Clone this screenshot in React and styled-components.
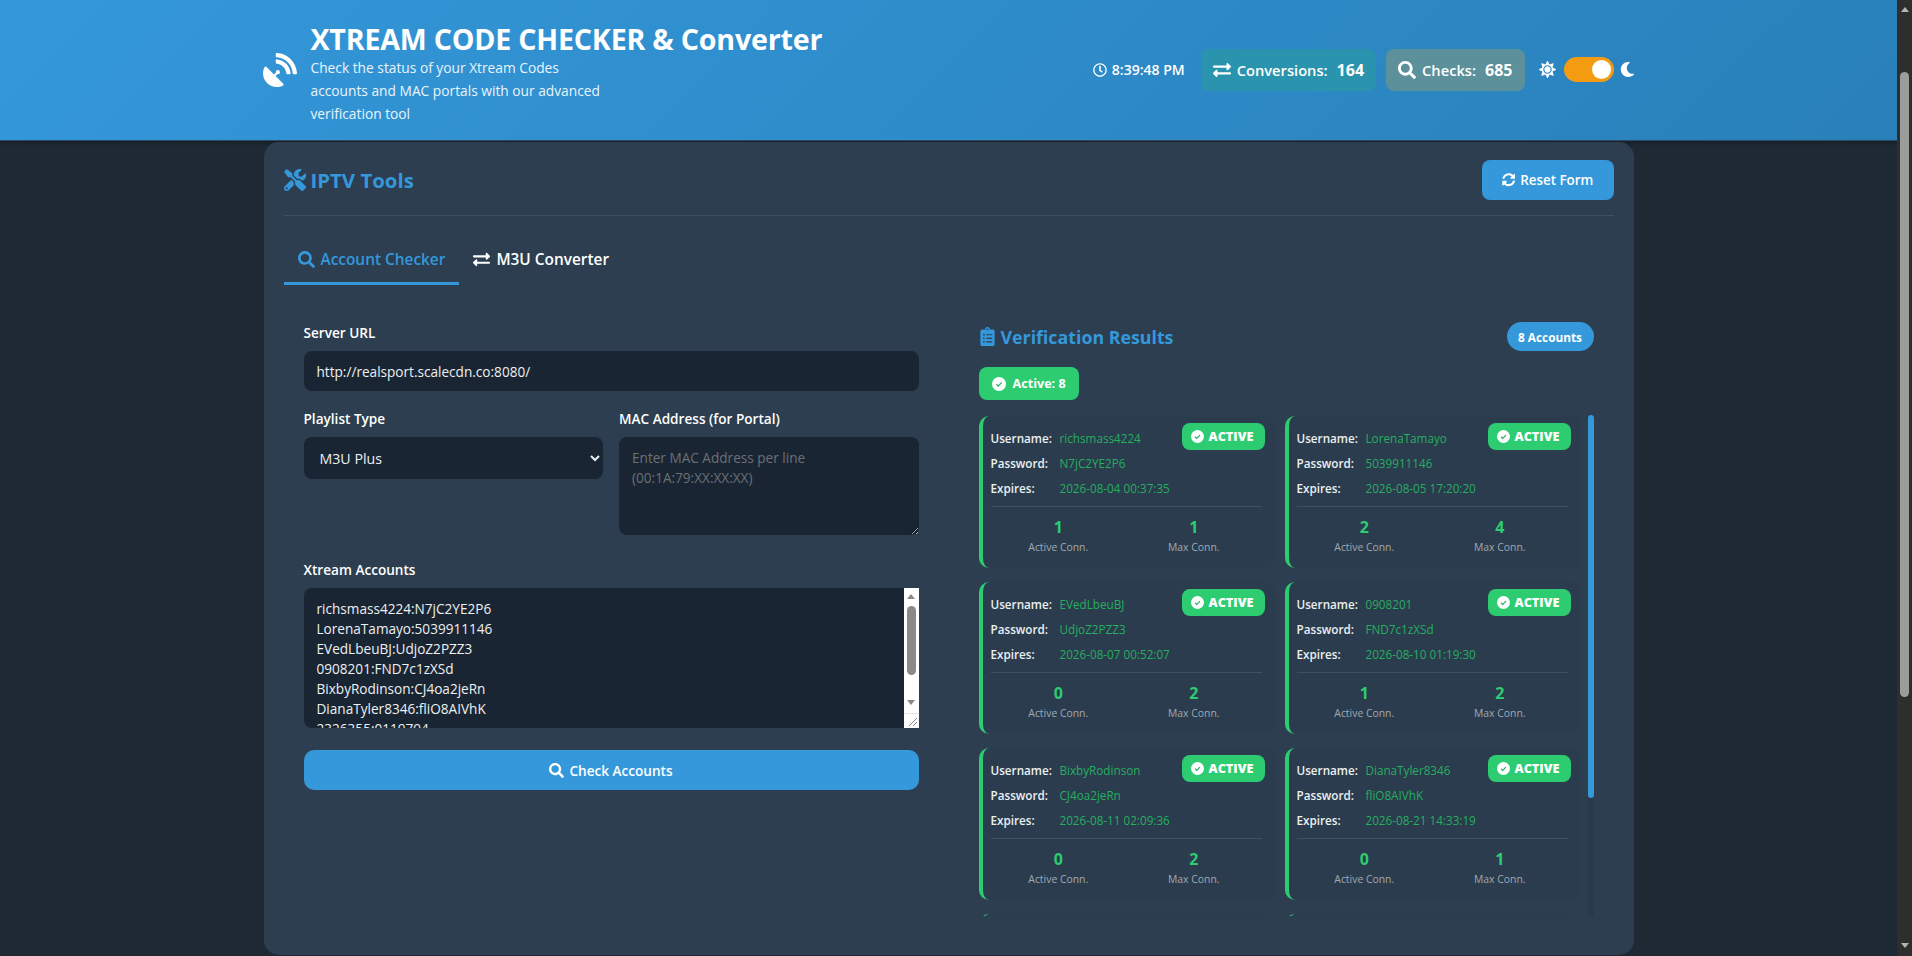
import React from "react";
import styled, { createGlobalStyle } from "styled-components";
import {
  FaSatelliteDish,
  FaTools,
  FaSearch,
  FaExchangeAlt,
  FaRegClock,
  FaSyncAlt,
  FaClipboardList,
  FaSun,
  FaMoon,
} from "react-icons/fa";

const accounts = [
  { user: "richsmass4224", pass: "N7jC2YE2P6", exp: "2026-08-04 00:37:35", active: 1, max: 1 },
  { user: "LorenaTamayo", pass: "5039911146", exp: "2026-08-05 17:20:20", active: 2, max: 4 },
  { user: "EVedLbeuBJ", pass: "UdjoZ2PZZ3", exp: "2026-08-07 00:52:07", active: 0, max: 2 },
  { user: "0908201", pass: "FND7c1zXSd", exp: "2026-08-10 01:19:30", active: 1, max: 2 },
  { user: "BixbyRodinson", pass: "CJ4oa2jeRn", exp: "2026-08-11 02:09:36", active: 0, max: 2 },
  { user: "DianaTyler8346", pass: "fliO8AIVhK", exp: "2026-08-21 14:33:19", active: 0, max: 1 },
  { user: "2326355", pass: "0119794", exp: "2026-08-24 09:12:41", active: 0, max: 1 },
  { user: "MarkusHale77", pass: "Tz81kQe3Lm", exp: "2026-08-29 21:44:02", active: 0, max: 1 },
];

const accountText = accounts.map((a) => a.user + ":" + a.pass).join("\n");

const GlobalStyle = createGlobalStyle`
  html, body {
    margin: 0;
    padding: 0;
    height: 100%;
    overflow: hidden;
    background: #1e2933;
  }
  * {
    box-sizing: border-box;
  }
  body {
    font-family: "Open Sans", "Noto Sans", sans-serif;
    color: #fff;
  }
`;

const Shell = styled.div`
  display: flex;
  height: 100vh;
`;

const Page = styled.div`
  flex: 1;
  min-width: 0;
  overflow: hidden;
  background: #1e2933;
`;

// scrollbars: the photographed browser hides real ones, so they are drawn
const PageRail = styled.div`
  position: relative;
  flex: none;
  width: 15px;
  background: #2e2e2e;
`;

const PageThumb = styled.div`
  position: absolute;
  top: 72px;
  left: 3px;
  width: 9px;
  height: 625px;
  border-radius: 5px;
  background: #9c9c9c;
`;

const Arrow = styled.div`
  position: absolute;
  left: ${(p) => p.$left}px;
  top: ${(p) => p.$top}px;
  width: 0;
  height: 0;
  border-left: 4px solid transparent;
  border-right: 4px solid transparent;
  ${(p) => (p.$down ? "border-top" : "border-bottom")}: 5px solid ${(p) => p.$color};
`;

const Header = styled.header`
  height: 141px;
  padding: 15px 0 16px;
  background: linear-gradient(135deg, #3498db, #2980b9);
  border-bottom: 1px solid #2c4a63;
  box-shadow: 0 2px 4px rgba(0, 0, 0, 0.25);
`;

const HeaderInner = styled.div`
  width: 1370px;
  height: 100%;
  margin: 0 auto;
  display: flex;
  align-items: center;
  justify-content: space-between;
`;

const Brand = styled.div`
  display: flex;
  align-items: center;
  gap: 14px;
  margin-left: -1px;

  & > svg {
    font-size: 34px;
    flex: none;
  }
`;

const BrandText = styled.div`
  padding-top: 7px;
`;

const Title = styled.h1`
  margin: 0 0 -1px;
  font-size: 28.6px;
  line-height: 36px;
  font-weight: 700;
  letter-spacing: -0.2px;
`;

const Subtitle = styled.p`
  margin: 0;
  width: 300px;
  font-size: 13.75px;
  line-height: 23px;
  color: #eaf4fb;
`;

const Stats = styled.div`
  display: flex;
  align-items: center;
`;

const Clock = styled.div`
  display: flex;
  align-items: center;
  gap: 5px;
  margin-right: 16px;
  font-size: 14px;
  font-weight: 600;
`;

const StatPill = styled.div`
  display: flex;
  align-items: center;
  gap: 6px;
  height: 42px;
  padding: 0 12px;
  margin-right: 10px;
  border-radius: 8px;
  font-size: 14.7px;
  font-weight: 600;
  background: ${(p) => p.$bg};

  & svg {
    font-size: 18px;
  }
  & b {
    margin-left: 3px;
    font-size: 16px;
    font-weight: 700;
  }
`;

const ThemeSwitch = styled.div`
  display: flex;
  align-items: center;
  margin-left: 4px;
  margin-right: -1px;
`;

const SunIcon = styled(FaSun)`
  font-size: 17px;
  margin-right: 8px;
`;

const MoonIcon = styled(FaMoon)`
  font-size: 15px;
  margin-left: 6px;
`;

const Toggle = styled.div`
  width: 50px;
  height: 25px;
  border-radius: 13px;
  background: #f39c12;
  display: flex;
  align-items: center;
  justify-content: flex-end;
  padding-right: 3px;

  &::after {
    content: "";
    width: 19px;
    height: 19px;
    border-radius: 50%;
    background: #fff;
  }
`;

const Main = styled.main`
  padding-top: 1px;
`;

const Card = styled.section`
  width: 1370px;
  margin: 0 auto;
  padding: 18px 20px 39px;
  border-radius: 15px;
  background: #2c3e50;
`;

const CardHead = styled.div`
  display: flex;
  align-items: center;
  justify-content: space-between;
  padding-bottom: 15px;
  border-bottom: 1px solid #3e5064;
`;

const CardTitle = styled.h2`
  margin: 0;
  display: flex;
  align-items: center;
  gap: 5px;
  font-size: 20.4px;
  font-weight: 700;
  color: #3498db;

  & svg {
    font-size: 22px;
  }
`;

const ResetButton = styled.button`
  display: flex;
  align-items: center;
  justify-content: center;
  gap: 5px;
  width: 132px;
  height: 40px;
  border: 0;
  border-radius: 8px;
  background: #3498db;
  color: #fff;
  font: 600 13.4px "Open Sans", sans-serif;
`;

const Tabs = styled.nav`
  display: flex;
  margin-top: 17px;
`;

const Tab = styled.div`
  display: flex;
  align-items: center;
  gap: 6px;
  height: 52px;
  padding: 4px 14px 0;
  font-size: 15.4px;
  font-weight: 600;
  color: ${(p) => (p.$active ? "#3498db" : "#fff")};
  border-bottom: 3px solid ${(p) => (p.$active ? "#3498db" : "transparent")};

  & svg {
    font-size: 17px;
  }
`;

const Columns = styled.div`
  display: grid;
  grid-template-columns: 615px 615px;
  column-gap: 60px;
  padding: 37px 20px 0;
`;

const Form = styled.form`
  padding-top: 1px;
`;

const Label = styled.label`
  display: block;
  height: 20px;
  margin-bottom: 8px;
  font-size: 13.6px;
  line-height: 20px;
  font-weight: 600;
`;

const Field = styled.div`
  margin-bottom: ${(p) => p.$gap || 18}px;
`;

const FormRow = styled.div`
  display: grid;
  grid-template-columns: 1fr 1fr;
  column-gap: 16px;
  margin-bottom: 25px;
`;

const controlStyles = `
  display: block;
  width: 100%;
  border: 0;
  outline: 0;
  border-radius: 8px;
  background: #1a2533;
  color: #ecf0f1;
  font-family: "Open Sans", sans-serif;
  font-size: 13.6px;
`;

const TextInput = styled.input`
  ${controlStyles}
  height: 40px;
  padding: 0 13px;
`;

const Select = styled.select`
  ${controlStyles}
  height: 42px;
  padding: 0 12px;
  font-size: 14.2px;
  color-scheme: dark;
`;

const TextArea = styled.textarea`
  ${controlStyles}
  height: ${(p) => p.$height}px;
  padding: 11px 13px;
  line-height: 20px;
  resize: vertical;
  overflow: hidden;

  &::placeholder {
    color: #6a7076;
    opacity: 1;
  }
`;

const TextAreaWrap = styled.div`
  position: relative;
`;

const AreaRail = styled.div`
  position: absolute;
  top: 0;
  right: 0;
  bottom: 0;
  width: 15px;
  background: #fff;
`;

const AreaThumb = styled.div`
  position: absolute;
  top: 18px;
  left: 3px;
  width: 9px;
  height: 69px;
  border-radius: 5px;
  background: #8a8a8a;
`;

const AreaCorner = styled.div`
  position: absolute;
  left: 0;
  right: 0;
  bottom: 0;
  height: 15px;
  border-top: 1px solid #e2e2e2;

  & svg {
    position: absolute;
    right: 1px;
    bottom: 1px;
  }
`;

const CheckButton = styled.button`
  display: flex;
  align-items: center;
  justify-content: center;
  gap: 5px;
  width: 100%;
  height: 40px;
  border: 0;
  border-radius: 10px;
  background: #3498db;
  color: #fff;
  font: 600 13.6px "Open Sans", sans-serif;

  & svg {
    font-size: 15px;
  }
`;

const ResultsHead = styled.div`
  display: flex;
  align-items: center;
  justify-content: space-between;
  height: 29px;
`;

const ResultsTitle = styled.h3`
  margin: 0 0 0 -1px;
  display: flex;
  align-items: center;
  gap: 4px;
  font-size: 17.8px;
  font-weight: 700;
  color: #3498db;

  & svg {
    font-size: 19px;
  }
`;

const CountBadge = styled.span`
  display: flex;
  align-items: center;
  justify-content: center;
  width: 87px;
  height: 29px;
  border-radius: 15px;
  background: #3498db;
  font-size: 11.8px;
  font-weight: 700;
`;

const Summary = styled.div`
  display: inline-flex;
  align-items: center;
  gap: 7px;
  height: 33px;
  margin: 16px 0;
  padding: 0 13px;
  border-radius: 8px;
  background: #2ecc71;
  font-size: 12.6px;
  font-weight: 700;
  vertical-align: top;
`;

const ResultFrame = styled.div`
  position: relative;
`;

const ResultList = styled.div`
  display: grid;
  grid-template-columns: 296px 296px;
  gap: 14px 10px;
  height: 500px;
  overflow: hidden;
  align-content: start;
`;

const ListRail = styled.div`
  position: absolute;
  top: 0;
  right: 0;
  bottom: 0;
  width: 6px;
  background: rgba(0, 0, 0, 0.05);
`;

const ListThumb = styled.div`
  position: absolute;
  top: -1px;
  left: 0;
  width: 6px;
  height: 383px;
  border-radius: 3px;
  background: #3498db;
`;

const ResultCard = styled.article`
  position: relative;
  height: 152px;
  padding: 9px 13px 10px 8px;
  border-left: 4px solid #2ecc71;
  border-radius: 10px;
  background: rgba(0, 0, 0, 0.03);
`;

const StatusBadge = styled.span`
  position: absolute;
  top: 7px;
  right: 10px;
  display: flex;
  align-items: center;
  gap: 5px;
  width: 83px;
  height: 27px;
  padding-left: 9px;
  border-radius: 8px;
  background: #2ecc71;
  font-size: 12.6px;
  font-weight: 800;
`;

const InfoRow = styled.div`
  display: grid;
  grid-template-columns: 69px 1fr;
  align-items: center;
  height: 25px;
  font-size: 11.7px;

  & strong {
    font-weight: 600;
    color: #ecf0f1;
  }
  & span {
    color: #27ae60;
  }
`;

const ConnGrid = styled.div`
  display: grid;
  grid-template-columns: 1fr 1fr;
  margin-top: 6px;
  padding-top: 10px;
  border-top: 1px solid #3e5064;
  text-align: center;
`;

const ConnValue = styled.div`
  font-size: 16px;
  line-height: 20px;
  font-weight: 700;
  color: #2ecc71;
`;

const ConnLabel = styled.div`
  font-size: 10.4px;
  line-height: 21px;
  color: #a0a9b3;
`;

function CheckBadge({ size }) {
  return (
    <svg width={size} height={size} viewBox="0 0 16 16" aria-hidden="true">
      <circle cx="8" cy="8" r="8" fill="#fff" />
      <path d="M5 8.3l2.1 2.1L11 6.2" fill="none" stroke="#27ae60" strokeWidth="1.4" />
    </svg>
  );
}

function AccountCard({ account }) {
  return (
    <ResultCard>
      <StatusBadge>
        <CheckBadge size={13} />
        ACTIVE
      </StatusBadge>
      <InfoRow>
        <strong>Username:</strong>
        <span>{account.user}</span>
      </InfoRow>
      <InfoRow>
        <strong>Password:</strong>
        <span>{account.pass}</span>
      </InfoRow>
      <InfoRow>
        <strong>Expires:</strong>
        <span>{account.exp}</span>
      </InfoRow>
      <ConnGrid>
        <div>
          <ConnValue>{account.active}</ConnValue>
          <ConnLabel>Active Conn.</ConnLabel>
        </div>
        <div>
          <ConnValue>{account.max}</ConnValue>
          <ConnLabel>Max Conn.</ConnLabel>
        </div>
      </ConnGrid>
    </ResultCard>
  );
}

export default function App() {
  return (
    <Shell>
      <GlobalStyle />
      <Page>
        <Header>
          <HeaderInner>
            <Brand>
              <FaSatelliteDish />
              <BrandText>
                <Title>XTREAM CODE CHECKER &amp; Converter</Title>
                <Subtitle>
                  Check the status of your Xtream Codes accounts and MAC portals with our advanced verification tool
                </Subtitle>
              </BrandText>
            </Brand>
            <Stats>
              <Clock>
                <FaRegClock />
                8:39:48 PM
              </Clock>
              <StatPill $bg="#2a94ae">
                <FaExchangeAlt />
                Conversions: <b>164</b>
              </StatPill>
              <StatPill $bg="#5c919c">
                <FaSearch />
                Checks: <b>685</b>
              </StatPill>
              <ThemeSwitch>
                <SunIcon />
                <Toggle />
                <MoonIcon />
              </ThemeSwitch>
            </Stats>
          </HeaderInner>
        </Header>
        <Main>
          <Card>
            <CardHead>
              <CardTitle>
                <FaTools />
                IPTV Tools
              </CardTitle>
              <ResetButton type="button">
                <FaSyncAlt />
                Reset Form
              </ResetButton>
            </CardHead>
            <Tabs>
              <Tab $active>
                <FaSearch />
                Account Checker
              </Tab>
              <Tab>
                <FaExchangeAlt />
                M3U Converter
              </Tab>
            </Tabs>
            <Columns>
              <Form>
                <Field>
                  <Label>Server URL</Label>
                  <TextInput defaultValue="http://realsport.scalecdn.co:8080/" />
                </Field>
                <FormRow>
                  <div>
                    <Label>Playlist Type</Label>
                    <Select defaultValue="m3u_plus">
                      <option value="m3u_plus">M3U Plus</option>
                      <option value="m3u">M3U</option>
                    </Select>
                  </div>
                  <div>
                    <Label>MAC Address (for Portal)</Label>
                    <TextArea $height={98} placeholder={"Enter MAC Address per line\n(00:1A:79:XX:XX:XX)"} />
                  </div>
                </FormRow>
                <Field $gap={22}>
                  <Label>Xtream Accounts</Label>
                  <TextAreaWrap>
                    <TextArea $height={140} defaultValue={accountText} />
                    <AreaRail>
                      <Arrow $left={3.5} $top={6} $color="#8a8a8a" />
                      <AreaThumb />
                      <Arrow $down $left={3.5} $top={112} $color="#8a8a8a" />
                      <AreaCorner>
                        <svg width="10" height="10" viewBox="0 0 10 10" aria-hidden="true">
                          <path d="M9 1L1 9M9 5L5 9" stroke="#8a8a8a" strokeWidth="1" fill="none" />
                        </svg>
                      </AreaCorner>
                    </AreaRail>
                  </TextAreaWrap>
                </Field>
                <CheckButton type="button">
                  <FaSearch />
                  Check Accounts
                </CheckButton>
              </Form>
              <div>
                <ResultsHead>
                  <ResultsTitle>
                    <FaClipboardList />
                    Verification Results
                  </ResultsTitle>
                  <CountBadge>8 Accounts</CountBadge>
                </ResultsHead>
                <Summary>
                  <CheckBadge size={14} />
                  Active: 8
                </Summary>
                <ResultFrame>
                  <ResultList>
                    {accounts.map((account) => (
                      <AccountCard key={account.user} account={account} />
                    ))}
                  </ResultList>
                  <ListRail>
                    <ListThumb />
                  </ListRail>
                </ResultFrame>
              </div>
            </Columns>
          </Card>
        </Main>
      </Page>
      <PageRail>
        <Arrow $left={3.5} $top={7} $color="#b4b4b4" />
        <PageThumb />
        <Arrow $down $left={3.5} $top={943} $color="#b4b4b4" />
      </PageRail>
    </Shell>
  );
}
